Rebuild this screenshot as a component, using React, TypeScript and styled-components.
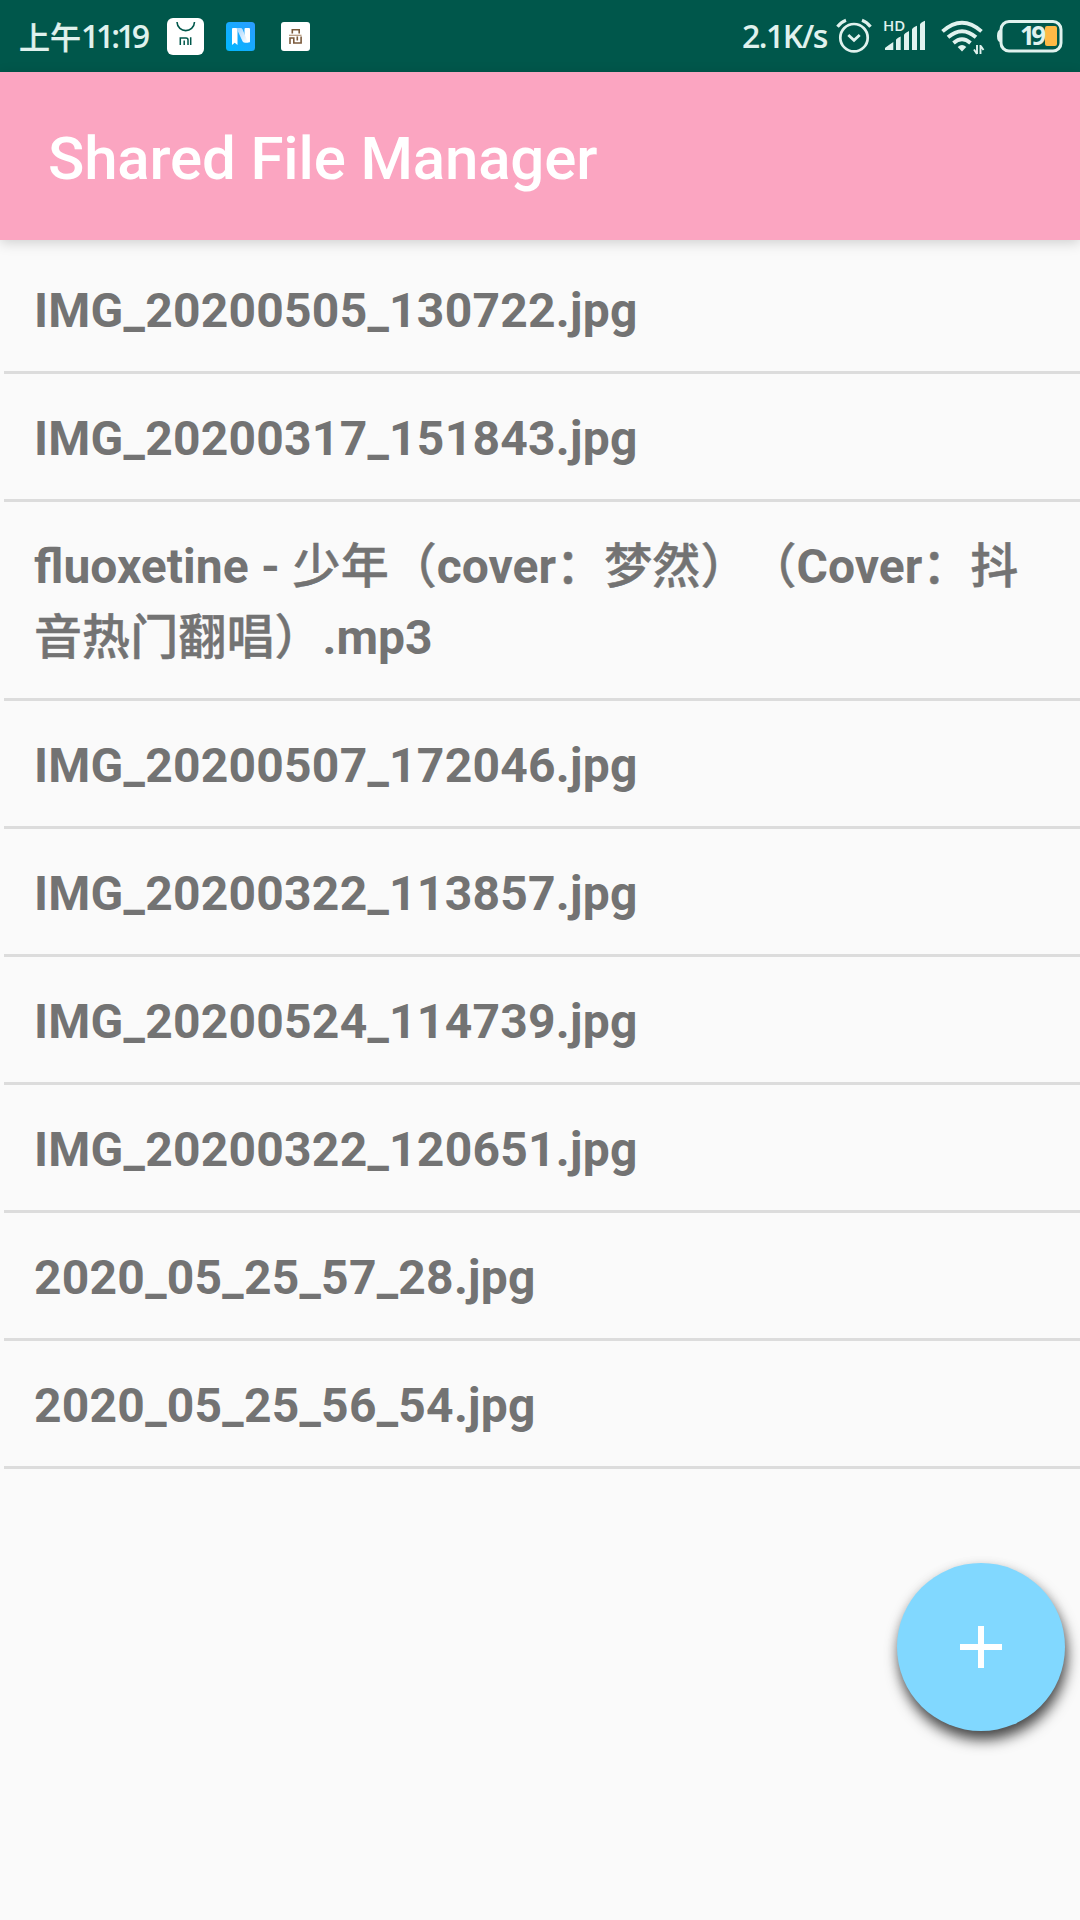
import React from "react";
import styled, { createGlobalStyle } from "styled-components";

const GlobalStyle = createGlobalStyle`
  * { box-sizing: border-box; }
  html, body { margin: 0; padding: 0; background: #fafafa; }
`;

const Screen = styled.div`
  width: 1080px;
  height: 1920px;
  display: flex;
  flex-direction: column;
  overflow: hidden;
  background: #fafafa;
  font-family: Roboto, "Noto Sans CJK SC", sans-serif;
`;

const StatusBar = styled.header`
  flex: none;
  height: 72px;
  display: flex;
  justify-content: space-between;
  align-items: center;
  padding: 0 17px 0 19px;
  background: #00574b;
  color: #e0f2ee;
`;

const StatusGroup = styled.div`
  display: flex;
  align-items: center;
`;

const Clock = styled.div`
  display: flex;
  align-items: center;
  width: 148px;
  height: 72px;
  white-space: nowrap;
`;

const Period = styled.span`
  font: 500 31px/72px "Noto Sans CJK SC", sans-serif;
  -webkit-text-stroke: 0.3px currentColor;
`;

const StatusText = styled.span<{ $spacing: number }>`
  font: 600 32px/72px "Open Sans", sans-serif;
  letter-spacing: ${(p) => p.$spacing}px;
  white-space: nowrap;
`;

const Speed = styled.div`
  width: 94px;
`;

const Glyph = styled.svg<{ $gap: number }>`
  flex: none;
  display: block;
  overflow: visible;
  margin-left: ${(p) => p.$gap}px;
`;

const AppBar = styled.div`
  flex: none;
  position: relative;
  height: 168px;
  display: flex;
  align-items: center;
  padding: 5px 48px 0;
  background: #fba5c1;
  box-shadow: 0 3px 12px rgba(0, 0, 0, 0.17);
`;

const Title = styled.h1`
  margin: 0;
  font-size: 60px;
  font-weight: 500;
  line-height: 70px;
  letter-spacing: -0.15px;
  color: #fff;
  white-space: nowrap;
`;

const FileList = styled.ul`
  margin: 0;
  padding: 6px 0 0 4px;
  list-style: none;
`;

const FileRow = styled.li<{ $tall?: boolean }>`
  height: ${(p) => (p.$tall ? 199 : 128)}px;
  padding: 29px 30px 0;
  border-bottom: 3px solid #dcdcdc;
  color: #737373;
  font-size: 48px;
  font-weight: 700;
  line-height: 71px;
  letter-spacing: ${(p) => (p.$tall ? "normal" : "0.25px")};
  word-spacing: 0.6px;
  white-space: nowrap;
`;

const Line = styled.div`
  height: 71px;
`;

const Han = styled.span`
  font-family: "Noto Sans CJK SC", sans-serif;
  font-weight: 500;
  font-size: 48px;
  line-height: 0;
  letter-spacing: 0.1px;
  text-spacing-trim: space-all;
  -webkit-text-stroke: 0.5px currentColor;
`;

const Footer = styled.div`
  display: flex;
  justify-content: flex-end;
  padding: 94px 15px 0 0;
`;

const Fab = styled.button`
  width: 168px;
  height: 168px;
  padding: 0;
  border: 0;
  border-radius: 50%;
  display: flex;
  align-items: center;
  justify-content: center;
  background: #81d8ff;
  box-shadow: 2px 9px 14px rgba(0, 0, 0, 0.7), 0 2px 12px rgba(0, 0, 0, 0.08);
`;

function StoreIcon() {
  return (
    <Glyph $gap={0} width="37" height="37" viewBox="0 0 37 37">
      <rect width="37" height="37" rx="6" fill="#fff" />
      <path d="M10 4C10.5 15.500 27 15.500 27.500 4" fill="none" stroke="#00574b" strokeWidth="1.600" />
      <path d="M13.300 27V20h5.700q2 0 2 2v5M17.200 22.500V27M23.700 19.200V27" fill="none" stroke="#00574b" strokeWidth="1.500" />
    </Glyph>
  );
}

function NotesIcon() {
  return (
    <Glyph $gap={22} width="29" height="29" viewBox="0 0 29 29">
      <defs>
        <linearGradient id="noteBg" x1="0" y1="1" x2="1" y2="0">
          <stop offset="0" stopColor="#00b8ff" />
          <stop offset="1" stopColor="#2c9cff" />
        </linearGradient>
        <linearGradient id="noteFold" x1="0" y1="0" x2="1" y2="1">
          <stop offset="0" stopColor="#9fd4ff" />
          <stop offset="1" stopColor="#ffffff" />
        </linearGradient>
      </defs>
      <rect width="29" height="29" rx="3.500" fill="url(#noteBg)" />
      <path d="M18.500 7q0-1 1-1H23q1 0 1 1v12.500q0 1-1 1h-4.500z" fill="#fff" />
      <path d="M6 7q0-1 1-1h3.500q1 0 1 1v16L8.700 20.800 6 23z" fill="#fff" />
      <path d="M10.500 6h4q1.500 0 2 1.300l5.500 13.200h-3.500q-1.500 0-2-1.200L11.500 8.500z" fill="url(#noteFold)" />
    </Glyph>
  );
}

function LockIcon() {
  return (
    <Glyph $gap={26} width="29" height="29" viewBox="0 0 29 29" fill="none" stroke="#7b5a3c" strokeWidth="1.600">
      <rect width="29" height="29" rx="3" fill="#fff" stroke="none" />
      <path d="M11.300 11.500V7.800h6.900v3.700" />
      <path d="M8 13.300h12.500" stroke="#b4977c" strokeWidth="1.200" />
      <path d="M9 22v-6h3.800v5h7.300v-6.500M16.300 14.500v4" />
    </Glyph>
  );
}

function AlarmIcon() {
  return (
    <Glyph $gap={0} width="36" height="36" viewBox="0 0 36 36" fill="none" stroke="#e0f2ee">
      <circle cx="18" cy="19.700" r="13.700" strokeWidth="2.700" />
      <path d="M12.300 17l5.700 5.300 5.700-5.300" strokeWidth="2.800" />
      <path d="M1.500 8.700Q5 4 10 2.200M26 2.200q5 1.800 8.500 6.500" strokeWidth="3.200" />
    </Glyph>
  );
}

const HdText = styled.text`
  font: 600 15px/1 "Open Sans", sans-serif;
`;

function SignalIcon() {
  return (
    <Glyph $gap={12} width="42" height="36" viewBox="0 0 42 36" fill="#e0f2ee">
      <HdText x="-1" y="13">HD</HdText>
      <path d="M1 32v-2q1-1 8.300-6v8zM12 32V22q0-1.500 4.700-3.500V32zM20 32V17q0-1.500 5-4v19zM28 32V11.500q0-1.500 5-3.700V32zM36 32V6.500q0-1.500 5-3.700V32z" />
    </Glyph>
  );
}

function WifiIcon() {
  return (
    <Glyph $gap={15} width="44" height="38" viewBox="0 -1 44 38" fill="none" stroke="#e0f2ee">
      <path d="M1.500 13.300Q21-4 40.500 13.300M7 19.300Q21 7 35 19.300M12.500 25Q21 17.500 29.500 25" strokeWidth="3.800" />
      <path d="M16.700 29q4.300-4 8.600 0L21 33.500z" fill="#e0f2ee" stroke="none" />
      <path d="M36 27v9M39.500 27v9M36 36l-3-4.500M39.500 27.500l3 4.500" strokeWidth="1.900" />
    </Glyph>
  );
}

const BatteryText = styled.text`
  font: 700 26px/1 "Open Sans", sans-serif;
  letter-spacing: -3.5px;
`;

function BatteryIcon() {
  return (
    <Glyph $gap={11} width="67" height="34" viewBox="0 0 67 34">
      <path d="M4.500 10.500Q1 11 1 17t3.500 6z" fill="#e0f2ee" />
      <rect x="5" y="2.500" width="60" height="29.500" rx="8" fill="none" stroke="#e0f2ee" strokeWidth="3" />
      <rect x="49" y="7" width="12" height="20" rx="2" fill="#ffb946" />
      <BatteryText x="24" y="26" fill="#e0f2ee">19</BatteryText>
    </Glyph>
  );
}

const before = [
  "IMG_20200505_130722.jpg",
  "IMG_20200317_151843.jpg",
];
const after = [
  "IMG_20200507_172046.jpg",
  "IMG_20200322_113857.jpg",
  "IMG_20200524_114739.jpg",
  "IMG_20200322_120651.jpg",
  "2020_05_25_57_28.jpg",
  "2020_05_25_56_54.jpg",
];

export default function App() {
  return (
    <Screen>
      <GlobalStyle />
      <StatusBar>
        <StatusGroup>
          <Clock>
            <Period>上午</Period>
            <StatusText $spacing={-3.2}>11:19</StatusText>
          </Clock>
          <StoreIcon />
          <NotesIcon />
          <LockIcon />
        </StatusGroup>
        <StatusGroup>
          <Speed>
            <StatusText $spacing={-1.5}>2.1K/s</StatusText>
          </Speed>
          <AlarmIcon />
          <SignalIcon />
          <WifiIcon />
          <BatteryIcon />
        </StatusGroup>
      </StatusBar>
      <AppBar>
        <Title>Shared File Manager</Title>
      </AppBar>
      <FileList>
        {before.map((name) => (
          <FileRow key={name}>{name}</FileRow>
        ))}
        <FileRow $tall>
          <Line>
            fluoxetine - <Han>少年（</Han>cover<Han>：梦然）（</Han>Cover<Han>：抖</Han>
          </Line>
          <Line>
            <Han>音热门翻唱）</Han>.mp3
          </Line>
        </FileRow>
        {after.map((name) => (
          <FileRow key={name}>{name}</FileRow>
        ))}
      </FileList>
      <Footer>
        <Fab aria-label="Add">
          <svg width="42" height="42" viewBox="0 0 42 42" fill="#fff">
            <path d="M18 0h6v18h18v6H24v18h-6V24H0v-6h18z" />
          </svg>
        </Fab>
      </Footer>
    </Screen>
  );
}
